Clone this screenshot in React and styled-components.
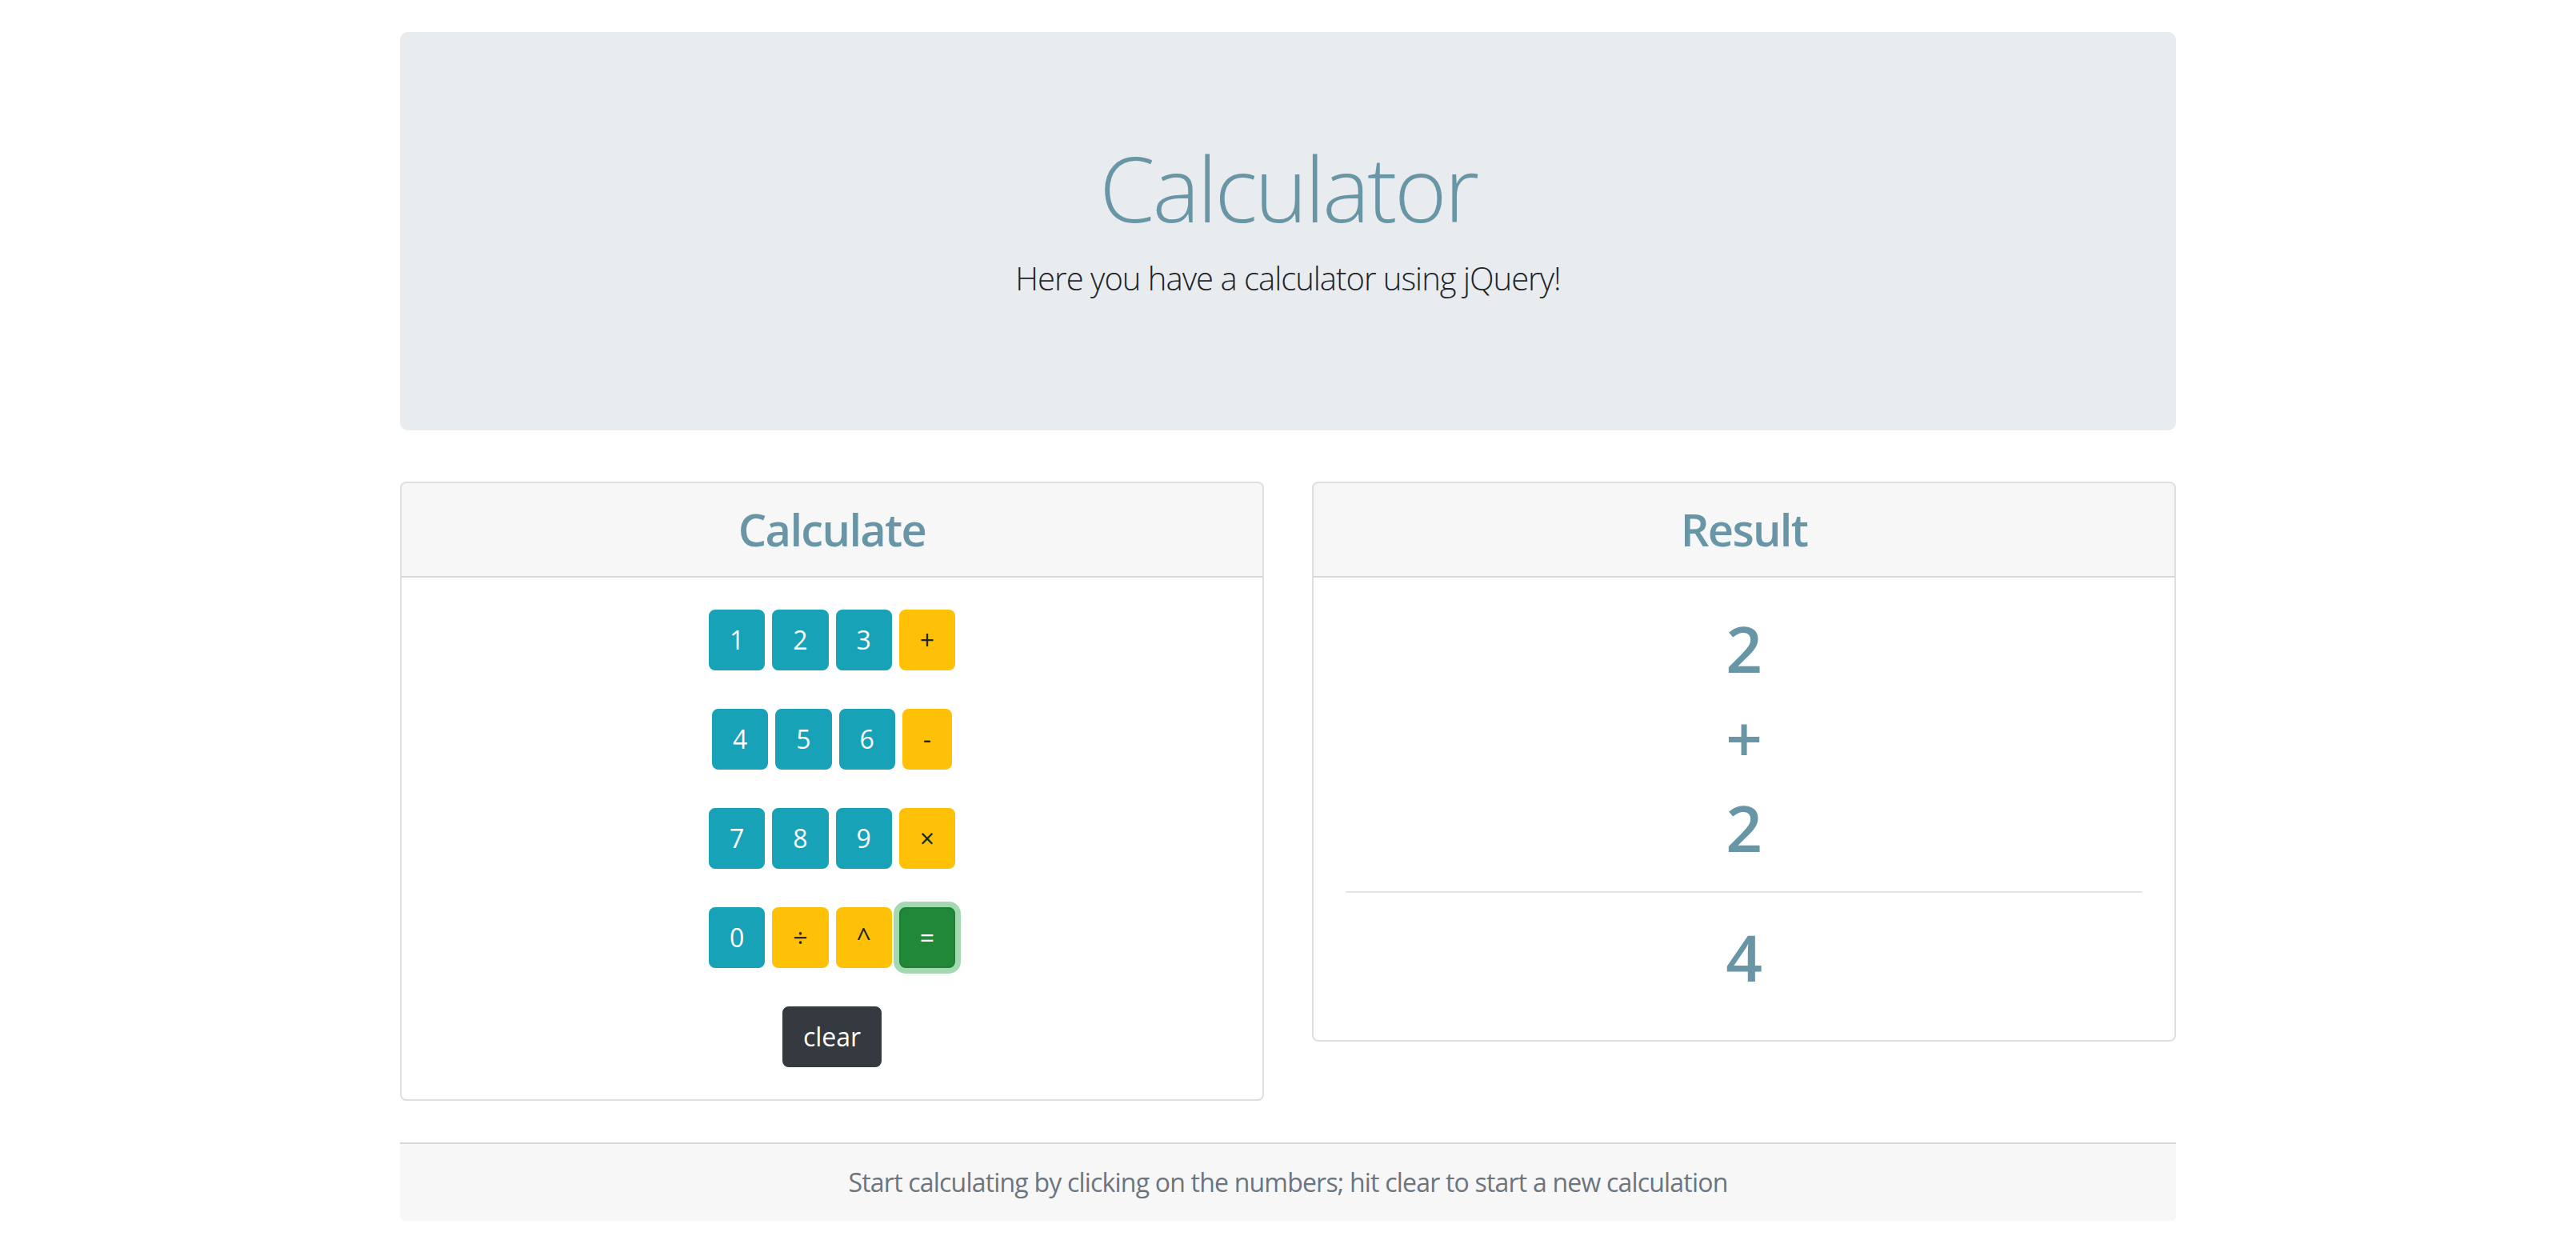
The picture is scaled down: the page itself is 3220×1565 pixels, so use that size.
import styled, { createGlobalStyle, css } from "styled-components";

const GlobalStyle = createGlobalStyle`
  * {
    box-sizing: border-box;
  }
  body {
    margin: 0;
    background: #fff;
    color: #212529;
    font-family: "Open Sans", "Noto Sans", "Liberation Sans", sans-serif;
    font-size: 32px;
    line-height: 1.5;
  }
`;

const accent = "#6996a6";

const Container = styled.div`
  width: 2220px;
  margin: 0 auto;
  padding-top: 40px;
`;

const Jumbotron = styled.header`
  background: #e9ecef;
  border-radius: 10px;
  padding: 128px 64px;
  margin-bottom: 64px;
  text-align: center;
`;

const Title = styled.h1`
  margin: 0 0 16px;
  font-size: 112px;
  font-weight: 300;
  line-height: 1.2;
  letter-spacing: -0.03em;
  color: ${accent};
`;

const Lead = styled.p`
  margin: 0 0 32px;
  font-size: 40px;
  font-weight: 300;
  line-height: 1.5;
  letter-spacing: -0.025em;
`;

const Row = styled.div`
  display: grid;
  grid-template-columns: 1fr 1fr;
  gap: 60px;
  align-items: start;
`;

const Card = styled.section`
  border: 2px solid rgba(0, 0, 0, 0.125);
  border-radius: 8px;
  background: #fff;
  overflow: hidden;
`;

const CardHeader = styled.div`
  padding: 24px 40px;
  background: rgba(0, 0, 0, 0.03);
  border-bottom: 2px solid rgba(0, 0, 0, 0.125);
  text-align: center;
`;

const CardTitle = styled.h3`
  margin: 0;
  font-size: 56px;
  font-weight: 600;
  line-height: 1.2;
  letter-spacing: -0.03em;
  color: ${accent};
`;

const CardBody = styled.div`
  padding: 40px;
  text-align: center;
`;

const Keypad = styled.div`
  display: flex;
  flex-direction: column;
  gap: 48px;
`;

const KeyRow = styled.div`
  display: flex;
  justify-content: center;
  gap: 9px;
`;

const variants = {
  info: css`
    background: #17a2b8;
    border-color: #17a2b8;
    color: #fff;
  `,
  warning: css`
    background: #ffc107;
    border-color: #ffc107;
    color: #212529;
  `,
  success: css`
    background: #218838;
    border-color: #1e7e34;
    color: #fff;
    box-shadow: 0 0 0 7px rgba(72, 180, 97, 0.5);
  `,
  dark: css`
    background: #343a40;
    border-color: #343a40;
    color: #fff;
  `,
};

const Key = styled.button`
  display: inline-block;
  padding: 12px 24px;
  border: 2px solid transparent;
  border-radius: 8px;
  font-family: inherit;
  font-size: 32px;
  font-weight: 400;
  line-height: 1.5;
  cursor: pointer;
  ${(p) => variants[p.$variant]}
`;

const Line = styled.h1`
  margin: 0 0 16px;
  font-size: 80px;
  font-weight: 600;
  line-height: 1.2;
  color: ${accent};
`;

const Rule = styled.hr`
  margin: 32px 0;
  border: 0;
  border-top: 2px solid rgba(0, 0, 0, 0.1);
`;

const Footer = styled.footer`
  margin-top: 52px;
  padding: 24px 40px;
  background: #f7f7f7;
  border-top: 2px solid rgba(0, 0, 0, 0.125);
  border-radius: 0 0 6px 6px;
  text-align: center;
  color: #6c757d;
  letter-spacing: -0.025em;
`;

const rows = [
  [["1", "info"], ["2", "info"], ["3", "info"], ["+", "warning"]],
  [["4", "info"], ["5", "info"], ["6", "info"], ["-", "warning"]],
  [["7", "info"], ["8", "info"], ["9", "info"], ["×", "warning"]],
  [["0", "info"], ["÷", "warning"], ["^", "warning"], ["=", "success"]],
  [["clear", "dark"]],
];

export default function App() {
  return (
    <>
      <GlobalStyle />
      <Container>
        <Jumbotron>
          <Title>Calculator</Title>
          <Lead>Here you have a calculator using jQuery!</Lead>
        </Jumbotron>
        <Row>
          <Card>
            <CardHeader>
              <CardTitle>Calculate</CardTitle>
            </CardHeader>
            <CardBody>
              <Keypad>
                {rows.map((row, i) => (
                  <KeyRow key={i}>
                    {row.map(([label, variant]) => (
                      <Key key={label} $variant={variant}>
                        {label}
                      </Key>
                    ))}
                  </KeyRow>
                ))}
              </Keypad>
            </CardBody>
          </Card>
          <Card>
            <CardHeader>
              <CardTitle>Result</CardTitle>
            </CardHeader>
            <CardBody>
              <Line>2</Line>
              <Line>+</Line>
              <Line>2</Line>
              <Rule />
              <Line>4</Line>
            </CardBody>
          </Card>
        </Row>
        <Footer>
          Start calculating by clicking on the numbers; hit clear to start a new
          calculation
        </Footer>
      </Container>
    </>
  );
}
